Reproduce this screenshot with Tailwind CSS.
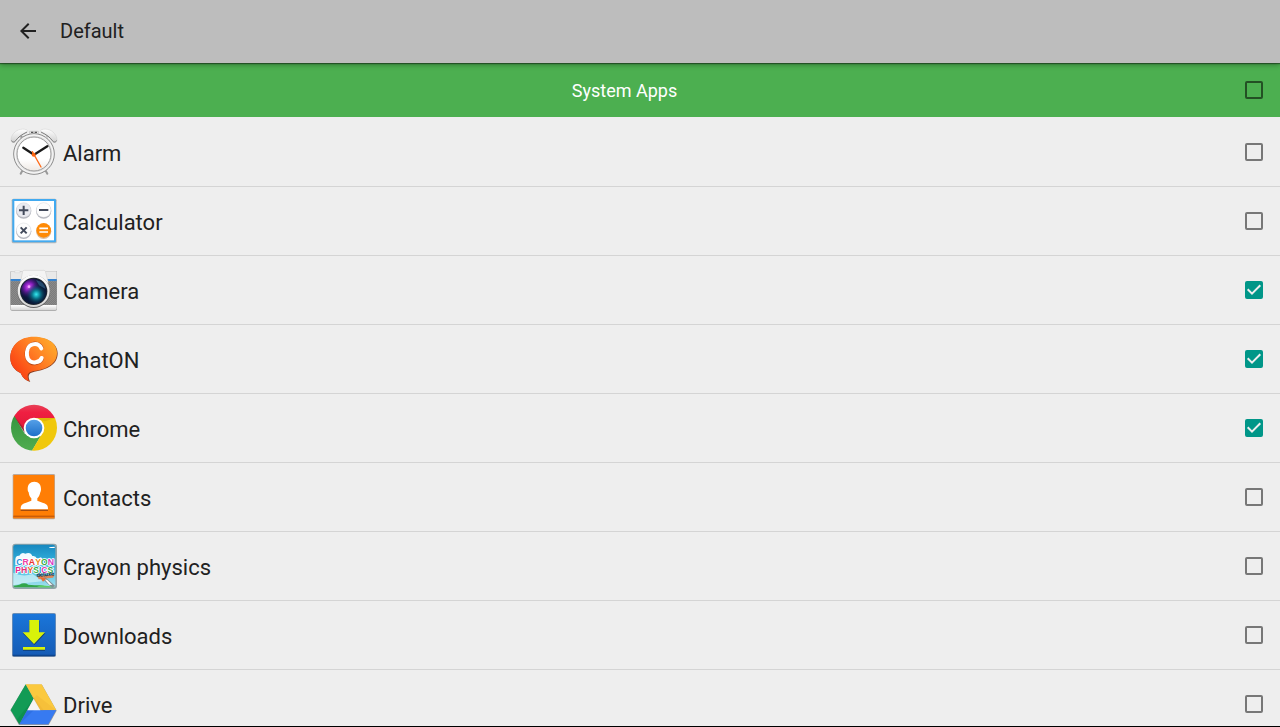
<!DOCTYPE html>
<html lang="en">

<head>
    <meta charset="UTF-8" />
    <meta name="viewport" content="width=device-width, initial-scale=1" />
    <title>Default</title>
    <script src="https://cdn.jsdelivr.net/npm/@tailwindcss/browser@4"></script>
</head>

<body class="bg-[#eeeeee] text-[#212121] font-['Roboto',sans-serif] flex flex-col h-screen overflow-hidden border-b border-black">
    <!-- Toolbar -->
    <header class="relative z-10 h-[63px] shrink-0 bg-[#bdbdbd] flex items-center px-4 pb-0.5 gap-5 shadow-[0_1px_1px_rgba(0,0,0,0.4),0_2px_5px_rgba(0,0,0,0.3)]">
        <button type="button" aria-label="Back">
            <svg class="size-6" viewBox="0 0 24 24" fill="#212121">
                <path d="M20 11H7.83l5.59-5.59L12 4l-8 8 8 8 1.41-1.41L7.83 13H20z" />
            </svg>
        </button>
        <h1 class="text-xl leading-6">Default</h1>
    </header>

    <!-- Section header -->
    <div class="h-[54px] shrink-0 bg-[#4caf50] flex items-center pr-[17px]">
        <label for="all" class="flex-1 pl-1 pt-0.5 text-center text-lg leading-6 text-white">System Apps</label>
        <input id="all" type="checkbox" class="appearance-none size-[18px] rounded-xs border-2 border-black/54 checked:bg-[#009688]" />
    </div>

    <!-- App list -->
    <ul class="flex-1 min-h-0 overflow-hidden pt-px text-[22px] leading-7">
        <li class="h-[69px] border-b border-[#d4d4d4] flex items-center pl-[10px] pr-[17px]">
            <svg class="size-12 shrink-0" viewBox="30 24 144 144">
                <defs>
                    <linearGradient id="bell" x1="0" y1="0" x2="0" y2="1">
                        <stop offset="0" stop-color="#fff" />
                        <stop offset="1" stop-color="#d0d0d0" />
                    </linearGradient>
                    <linearGradient id="dial" x1="0" y1="0" x2="0" y2="1">
                        <stop offset="0" stop-color="#fff" />
                        <stop offset=".65" stop-color="#fff" />
                        <stop offset="1" stop-color="#eee9e4" />
                    </linearGradient>
                </defs>
                <path d="M67 152l-5 9M137 152l5 9" stroke="#9a9a9a" stroke-width="6" stroke-linecap="round" />
                <path d="M66 52l-8-8M140 50l8-8" stroke="#999" stroke-width="7" />
                <path d="M89 41V34h26v7" fill="#eee" stroke="#bbb" stroke-width="2" />
                <path d="M93 37h7M104 37h7" stroke="#555" stroke-width="4" />
                <path d="M33 60c0-14 12-29 29-32 9-2 18 0 21 4 1 5-4 7-10 10-12 6-20 12-27 23-4 5-13 3-13-5z" fill="url(#bell)" stroke="#ccc" stroke-width="1.5" />
                <path d="M171 60c0-14-12-29-29-32-9-2-18 0-21 4-1 5 4 7 10 10 12 6 20 12 27 23 4 5 13 3 13-5z" fill="url(#bell)" stroke="#ccc" stroke-width="1.5" />
                <path d="M34 62c5 6 9 5 13 0 7-10 17-18 34-26M170 62c-5 6-9 5-13 0-7-10-17-18-34-26" fill="none" stroke="#666" stroke-width="2.5" />
                <circle cx="102" cy="102" r="61" fill="#e4e4e4" stroke="#8c8c8c" stroke-width="3" />
                <circle cx="102" cy="102" r="57" fill="none" stroke="#fafafa" stroke-width="3" />
                <circle cx="102" cy="102" r="51" fill="url(#dial)" stroke="#999" stroke-width="3" />
                <path d="M70 83l32 21 40-25" fill="none" stroke="#1a1a1a" stroke-width="7" stroke-linecap="round" stroke-linejoin="round" />
                <path d="M97 95l26 46" stroke="#ff6c1a" stroke-width="4" stroke-linecap="round" />
                <circle cx="101" cy="104" r="6" fill="#ff6510" />
            </svg>
            <label for="alarm" class="flex-1 pl-[5px] pt-1">Alarm</label>
            <input id="alarm" type="checkbox" class="appearance-none size-[18px] rounded-xs border-2 border-black/50 checked:bg-[#009688]" />
        </li>
        <li class="h-[69px] border-b border-[#d4d4d4] flex items-center pl-[10px] pr-[17px]">
            <svg class="size-12 shrink-0" viewBox="30 27 144 144">
                <rect x="35" y="32" width="135" height="134" rx="5" fill="#b9b9b9" />
                <rect x="37" y="33" width="131" height="130" rx="4" fill="#42aaf0" />
                <rect x="43" y="39" width="119" height="118" fill="#fff" />
                <circle cx="71" cy="69" r="23" fill="#b4b6be" />
                <circle cx="71" cy="66" r="22" fill="#e9eaf0" stroke="#c5c7cf" />
                <circle cx="131" cy="69" r="23" fill="#b4b6be" />
                <circle cx="131" cy="66" r="22" fill="#fdfdfd" stroke="#c5c7cf" />
                <circle cx="71" cy="130" r="23" fill="#b4b6be" />
                <circle cx="71" cy="127" r="22" fill="#fdfdfd" stroke="#c5c7cf" />
                <circle cx="131" cy="130" r="23" fill="#d9bfa5" />
                <circle cx="131" cy="127" r="22" fill="#ff8a05" />
                <path d="M57 67h28M71 53v28M117 66h28M62 118l18 18M80 118l-18 18" stroke="#434b5c" stroke-width="6" />
                <path d="M118 121h26M118 132h26" stroke="#fff" stroke-width="5" />
            </svg>
            <label for="calculator" class="flex-1 pl-[5px] pt-1">Calculator</label>
            <input id="calculator" type="checkbox" class="appearance-none size-[18px] rounded-xs border-2 border-black/50 checked:bg-[#009688]" />
        </li>
        <li class="h-[69px] border-b border-[#d4d4d4] flex items-center pl-[10px] pr-[17px]">
            <svg class="size-12 shrink-0" viewBox="30 27 144 144">
                <defs>
                    <radialGradient id="violet" cx=".32" cy=".33" r=".45">
                        <stop offset="0" stop-color="#e05cff" />
                        <stop offset=".35" stop-color="#8a1fc0" />
                        <stop offset="1" stop-color="#30106a" stop-opacity="0" />
                    </radialGradient>
                    <radialGradient id="cyan" cx=".6" cy=".62" r=".42">
                        <stop offset="0" stop-color="#35e8f0" />
                        <stop offset=".35" stop-color="#0c8296" />
                        <stop offset="1" stop-color="#04223c" stop-opacity="0" />
                    </radialGradient>
                    <linearGradient id="body" x1="0" y1="0" x2="0" y2="1">
                        <stop offset="0" stop-color="#fff" />
                        <stop offset="1" stop-color="#d5d5d5" />
                    </linearGradient>
                    <pattern id="grip" width="6" height="6" patternUnits="userSpaceOnUse">
                        <rect width="6" height="6" fill="#8a8a8a" />
                        <path d="M0 0h3v3H0zM3 3h3v3H3z" fill="#7c7c7c" />
                    </pattern>
                </defs>
                <path d="M31 46q0-4 4-4h136v114q0 5-5 5H36q-5 0-5-5z" fill="#9b9b9b" />
                <path d="M32 46q0-3 3-3h135v24H32z" fill="#e9e9e9" />
                <path d="M44 42h16v5H44z" fill="#f8f8f8" stroke="#bbb" />
                <path d="M32 66h138v7H32z" fill="#3583cf" />
                <path d="M32 73h138v71H32z" fill="url(#grip)" />
                <path d="M32 144h138v11q0 4-4 4H36q-4 0-4-4z" fill="url(#body)" />
                <path d="M62 73l6-30q1-3 5-3h58q4 0 5 3l8 30v30H60z" fill="#f4f4f4" stroke="#c9c9c9" stroke-width="1.5" />
                <circle cx="101" cy="104" r="49" fill="#666" />
                <circle cx="101" cy="102" r="48" fill="url(#body)" />
                <circle cx="101" cy="103" r="41" fill="#1d2630" />
                <circle cx="101" cy="103" r="38" fill="#0a1638" />
                <circle cx="101" cy="103" r="38" fill="url(#violet)" />
                <circle cx="101" cy="103" r="38" fill="url(#cyan)" />
                <path d="M108 69q24 5 29 27l-20-11z" fill="#3b779a" opacity=".55" />
                <circle cx="87" cy="89" r="4" fill="#f1a0ff" />
            </svg>
            <label for="camera" class="flex-1 pl-[5px] pt-1">Camera</label>
            <div class="grid">
                <input id="camera" type="checkbox" checked class="peer col-start-1 row-start-1 appearance-none size-[18px] rounded-xs border-2 border-black/50 checked:bg-[#009688] checked:border-[#009688]" />
                <svg class="hidden peer-checked:block pointer-events-none col-start-1 row-start-1 size-[18px]" viewBox="0 0 18 18" fill="none" stroke="#eee" stroke-width="2">
                    <path d="M2.7 8.3L7 12.6l8.3-8.3" />
                </svg>
            </div>
        </li>
        <li class="h-[69px] border-b border-[#d4d4d4] flex items-center pl-[10px] pr-[17px]">
            <svg class="size-12 shrink-0" viewBox="30 27 144 144">
                <defs>
                    <linearGradient id="bubble" x1="1" y1="0" x2="0.1" y2=".7">
                        <stop offset="0" stop-color="#ffb52b" />
                        <stop offset=".5" stop-color="#ff8124" />
                        <stop offset="1" stop-color="#fb4514" />
                    </linearGradient>
                </defs>
                <path d="M101 34c42 0 72 19 72 48 0 34-32 50-70 55-10 2-17 6-17 14 0 7 2 12 5 17-13-3-23-12-29-26-18-8-31-25-31-45 0-37 28-63 70-63z" fill="#8a3d20" />
                <path d="M101 32c42 0 70 19 70 48 0 34-32 50-70 55-10 2-18 6-18 14 0 7 2 12 4 17-11-4-20-12-25-25-18-8-31-25-31-45 0-37 27-64 70-64z" fill="url(#bubble)" />
                <path d="M125 65C119 51 104 51 97 54C80 61 78 80 80 91C83 111 99 114 108 112C118 110 123 105 126 99" fill="none" stroke="#b84616" stroke-width="11" stroke-linecap="round" />
                <path d="M124 67C118 54 106 53 98 55C82 59 80 78 81 88C83 106 97 111 107 109C117 108 123 102 125 96" fill="none" stroke="#fff" stroke-width="12" stroke-linecap="round" />
            </svg>
            <label for="chaton" class="flex-1 pl-[5px] pt-1">ChatON</label>
            <div class="grid">
                <input id="chaton" type="checkbox" checked class="peer col-start-1 row-start-1 appearance-none size-[18px] rounded-xs border-2 border-black/50 checked:bg-[#009688] checked:border-[#009688]" />
                <svg class="hidden peer-checked:block pointer-events-none col-start-1 row-start-1 size-[18px]" viewBox="0 0 18 18" fill="none" stroke="#eee" stroke-width="2">
                    <path d="M2.7 8.3L7 12.6l8.3-8.3" />
                </svg>
            </div>
        </li>
        <li class="h-[69px] border-b border-[#d4d4d4] flex items-center pl-[10px] pr-[17px]">
            <svg class="size-12 shrink-0" viewBox="30 27 144 144">
                <defs>
                    <clipPath id="disc">
                        <circle cx="102" cy="98" r="69" />
                    </clipPath>
                    <linearGradient id="red" x1="0" y1="0" x2="0" y2="1">
                        <stop offset="0" stop-color="#e5475a" />
                        <stop offset=".3" stop-color="#f01f42" />
                        <stop offset="1" stop-color="#dc1735" />
                    </linearGradient>
                    <linearGradient id="green" x1="0" y1="0" x2="0" y2="1">
                        <stop offset="0" stop-color="#30923d" />
                        <stop offset="1" stop-color="#51ad50" />
                    </linearGradient>
                    <linearGradient id="blue" x1="0" y1="0" x2="0" y2="1">
                        <stop offset="0" stop-color="#55a0e8" />
                        <stop offset="1" stop-color="#1d6fc8" />
                    </linearGradient>
                </defs>
                <g clip-path="url(#disc)">
                    <path d="M30 26h144v44H102l-28 42L30 50z" fill="url(#red)" />
                    <path d="M30 45l15 21 29 50 28 14 24-14-32 55H30z" fill="url(#green)" />
                    <path d="M102 69h72v101H94l32-54z" fill="#f0c80c" />
                    <path d="M102 69h66l-34 10z" fill="#b78d00" opacity=".3" />
                    <path d="M45 66l29 50 3-10z" fill="#123d1c" opacity=".3" />
                </g>
                <circle cx="102" cy="99" r="31" fill="#fff" />
                <circle cx="102" cy="99" r="25" fill="url(#blue)" />
            </svg>
            <label for="chrome" class="flex-1 pl-[5px] pt-1">Chrome</label>
            <div class="grid">
                <input id="chrome" type="checkbox" checked class="peer col-start-1 row-start-1 appearance-none size-[18px] rounded-xs border-2 border-black/50 checked:bg-[#009688] checked:border-[#009688]" />
                <svg class="hidden peer-checked:block pointer-events-none col-start-1 row-start-1 size-[18px]" viewBox="0 0 18 18" fill="none" stroke="#eee" stroke-width="2">
                    <path d="M2.7 8.3L7 12.6l8.3-8.3" />
                </svg>
            </div>
        </li>
        <li class="h-[69px] border-b border-[#d4d4d4] flex items-center pl-[10px] pr-[17px]">
            <svg class="size-12 shrink-0" viewBox="30 27 144 144">
                <rect x="38" y="30" width="127" height="136" rx="4" fill="#b9aaa0" />
                <rect x="40" y="33" width="123" height="130" rx="3" fill="#ff7e05" />
                <path d="M40 155h123v3H40z" fill="#a9480b" />
                <path d="M40 158h123v5H40z" fill="#f47a0c" />
                <path d="M62 139h82" stroke="#a54c0d" stroke-width="4" />
                <path d="M103 53c13 0 20 9 20 22 0 5-1 8-2 10-2 9-5 15-9 18v7c10 5 22 6 28 12 4 4 4 9 4 14H62c0-5 0-10 4-14 6-6 18-7 28-12v-7c-4-3-7-9-8-18-2-2-3-5-3-10 0-13 7-22 20-22z" fill="#fff" />
            </svg>
            <label for="contacts" class="flex-1 pl-[5px] pt-1">Contacts</label>
            <input id="contacts" type="checkbox" class="appearance-none size-[18px] rounded-xs border-2 border-black/50 checked:bg-[#009688]" />
        </li>
        <li class="h-[69px] border-b border-[#d4d4d4] flex items-center pl-[10px] pr-[17px]">
            <svg class="size-12 shrink-0" viewBox="30 27 144 144" font-family="Liberation Sans, sans-serif" font-weight="700">
                <defs>
                    <clipPath id="tile">
                        <rect x="40" y="35" width="126" height="128" rx="8" />
                    </clipPath>
                    <linearGradient id="sky" x1="0" y1="0" x2="0" y2="1">
                        <stop offset="0" stop-color="#1686be" />
                        <stop offset=".5" stop-color="#38b9e2" />
                        <stop offset="1" stop-color="#a8e2ef" />
                    </linearGradient>
                </defs>
                <rect x="37" y="32" width="134" height="136" rx="9" fill="#8fa3a8" />
                <g clip-path="url(#tile)">
                    <path d="M38 33h130v132H38z" fill="url(#sky)" />
                    <path d="M46 80q0-13 12-12 6-12 18-6 16-6 21 7 10-2 14 8l12-4 8 10v14H46z" fill="#f2fbff" />
                    <path d="M38 119q30 14 60 4l30 22-60 6-30 6z" fill="#d5f3f8" opacity=".7" />
                    <path d="M146 43l18-2v4h-14z" fill="#fff" />
                    <path d="M38 165v-7q15-1 20-3 15-8 27 0 20 2 36 2l47 8z" fill="#32a64c" />
                    <path d="M104 165l18-8 46 4v4z" fill="#5dd067" />
                </g>
                <g font-size="26" stroke="#fff" stroke-width="5" stroke-linejoin="round" paint-order="stroke">
                    <text x="49" y="95"><tspan fill="#1f8fdc">C</tspan><tspan fill="#ee3fa5">R</tspan><tspan fill="#e93333">A</tspan><tspan fill="#f08b21">Y</tspan><tspan fill="#41ad3a">O</tspan><tspan fill="#d736c4">N</tspan></text>
                    <text x="46" y="120"><tspan fill="#eb258f">P</tspan><tspan fill="#e0347a">H</tspan><tspan fill="#ef5d23">Y</tspan><tspan fill="#36ad47">S</tspan><tspan fill="#2291b8">I</tspan><tspan fill="#e235b0">C</tspan><tspan fill="#30a84f">S</tspan></text>
                </g>
                <path d="M112 129l52-3-5 8-43 5z" fill="#dc895b" />
                <text x="110" y="132" font-size="17" fill="#152a42" transform="rotate(-5 110 132)">deluxe</text>
                <path d="M127 137l9-4 29 25-8 7z" fill="#7f9196" />
                <path d="M134 139l8 2 15 15-9-1z" fill="#fff" />
                <path d="M120 133l18 4-9 9z" fill="#f06b2b" />
            </svg>
            <label for="crayon" class="flex-1 pl-[5px] pt-1">Crayon physics</label>
            <input id="crayon" type="checkbox" class="appearance-none size-[18px] rounded-xs border-2 border-black/50 checked:bg-[#009688]" />
        </li>
        <li class="h-[69px] border-b border-[#d4d4d4] flex items-center pl-[10px] pr-[17px]">
            <svg class="size-12 shrink-0" viewBox="30 27 144 144">
                <defs>
                    <linearGradient id="down" x1="0" y1="0" x2="0" y2="1">
                        <stop offset="0" stop-color="#1a76da" />
                        <stop offset="1" stop-color="#155bb5" />
                    </linearGradient>
                </defs>
                <rect x="36" y="33" width="132" height="132" rx="5" fill="#8296ae" />
                <rect x="38" y="35" width="128" height="126" rx="4" fill="url(#down)" />
                <path d="M38 158h128v2q0 3-4 3H42q-4 0-4-3z" fill="#0d458e" />
                <path d="M88 57h30v37h18l-33 35-35-35h20zM69 138h66v8H69z" fill="#123e70" />
                <path d="M88 54h29v37h18l-33 35-34-35h20zM69 135h66v8H69z" fill="#d8f20a" />
            </svg>
            <label for="downloads" class="flex-1 pl-[5px] pt-1">Downloads</label>
            <input id="downloads" type="checkbox" class="appearance-none size-[18px] rounded-xs border-2 border-black/50 checked:bg-[#009688]" />
        </li>
        <li class="h-[69px] border-b border-[#d4d4d4] flex items-center pl-[10px] pr-[17px]">
            <svg class="size-12 shrink-0" viewBox="30 39 144 144">
                <path d="M77 53h49l44 78-24 43H57l-26-44z" fill="#999" />
                <path d="M77 52l24 43-43 77-26-43z" fill="#129b55" />
                <path d="M77 52h48l44 78h-48z" fill="#fbc93f" />
                <path d="M82 129h87l-24 43H58z" fill="#377af1" />
                <path d="M92 79l9 16 20 35h10z" fill="#e9a92d" opacity=".3" />
                <path d="M101 95l9-11 59 46h-48z" fill="#e9a92d" opacity=".25" />
                <path d="M101 95l-43 77-8-14z" fill="#067c42" opacity=".35" />
                <path d="M82 129l20 0-44 43z" fill="#1b58cb" opacity=".3" />
                <path d="M101 95l20 35H82z" fill="#f4f4f4" />
            </svg>
            <label for="drive" class="flex-1 pl-[5px] pt-1">Drive</label>
            <input id="drive" type="checkbox" class="appearance-none size-[18px] rounded-xs border-2 border-black/50 checked:bg-[#009688]" />
        </li>
    </ul>
</body>

</html>
